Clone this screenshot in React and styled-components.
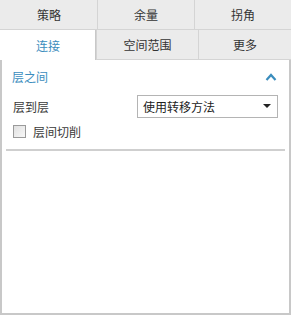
import styled, { createGlobalStyle } from 'styled-components';
import { useState } from 'react';

const GlobalStyle = createGlobalStyle`
  html, body {
    margin: 0;
    padding: 0;
    background: #ffffff;
  }
  body {
    font-family: "Noto Sans CJK SC", "Noto Sans", sans-serif;
    font-size: 12px;
    color: #3a3a3a;
  }
`;

const Frame = styled.div`
  width: 291px;
  height: 315px;
  display: flex;
  flex-direction: column;
  box-sizing: border-box;
`;

const TabRow = styled.div`
  display: grid;
  grid-template-columns: ${(p) => p.$cols};
  height: 29px;
  background: #ebebeb;
  border-bottom: 1px solid #d4d4d4;
`;

const Tab = styled.div`
  display: flex;
  align-items: center;
  justify-content: center;
  font-size: 12px;
  color: ${(p) => (p.$active ? '#3b8dbd' : '#333333')};
  background: ${(p) => (p.$active ? '#ffffff' : '#ebebeb')};
  border-left: 1px solid ${(p) => (p.$first ? 'transparent' : '#d4d4d4')};
  border-right: ${(p) => (p.$active ? '1px solid #c8c8c8' : 'none')};
  margin-bottom: ${(p) => (p.$active ? '-1px' : '0')};
  box-sizing: border-box;
  cursor: pointer;
`;

const Panel = styled.div`
  flex: 1;
  background: #ffffff;
  border-left: 2px solid #c8c8c8;
  border-right: 2px solid #c8c8c8;
  border-bottom: 2px solid #c8c8c8;
  padding: 0 3px;
  display: flex;
  flex-direction: column;
`;

const SectionHeader = styled.div`
  display: flex;
  align-items: center;
  justify-content: space-between;
  height: 33px;
  padding: 0 9px 0 7px;
  color: #3b8dbd;
  font-size: 12px;
`;

const Row = styled.div`
  display: flex;
  align-items: center;
  justify-content: space-between;
  height: 26px;
  padding: 0 8px;
`;

const Select = styled.div`
  width: 141px;
  height: 23px;
  box-sizing: border-box;
  border: 1px solid #b4b4b4;
  display: flex;
  align-items: center;
  justify-content: space-between;
  padding: 0 6px 0 5px;
  font-size: 12px;
  color: #222222;
  background: #ffffff;
`;

const Caret = styled.span`
  width: 0;
  height: 0;
  border-left: 4px solid transparent;
  border-right: 4px solid transparent;
  border-top: 4px solid #222222;
`;

const CheckRow = styled.label`
  display: flex;
  align-items: center;
  gap: 7px;
  height: 24px;
  padding: 0 8px;
`;

const Box = styled.span`
  width: 11px;
  height: 11px;
  border: 1px solid #9a9a9a;
  background: linear-gradient(135deg, #e0e0e0, #f8f8f8);
`;

const Divider = styled.div`
  height: 2px;
  background: #cfcfcf;
  margin: 6px 1px 0 1px;
`;

const Chevron = () => (
  <svg width="12" height="8" viewBox="0 0 12 8">
    <path d="M1.5 7 L6 2 L10.5 7" fill="none" stroke="#3b8dbd" strokeWidth="2.2" />
  </svg>
);

const App = () => {
  const [active] = useState('连接');
  return (
    <>
      <GlobalStyle />
      <Frame>
        <TabRow $cols="97px 97px 97px">
          <Tab $first>策略</Tab>
          <Tab>余量</Tab>
          <Tab>拐角</Tab>
        </TabRow>
        <TabRow $cols="96px 102px 93px">
          <Tab $first $active={active === '连接'}>连接</Tab>
          <Tab>空间范围</Tab>
          <Tab>更多</Tab>
        </TabRow>
        <Panel>
          <SectionHeader>
            <span>层之间</span>
            <Chevron />
          </SectionHeader>
          <Row>
            <span>层到层</span>
            <Select>
              <span>使用转移方法</span>
              <Caret />
            </Select>
          </Row>
          <CheckRow>
            <Box />
            <span>层间切削</span>
          </CheckRow>
          <Divider />
        </Panel>
      </Frame>
    </>
  );
};

export default App;
